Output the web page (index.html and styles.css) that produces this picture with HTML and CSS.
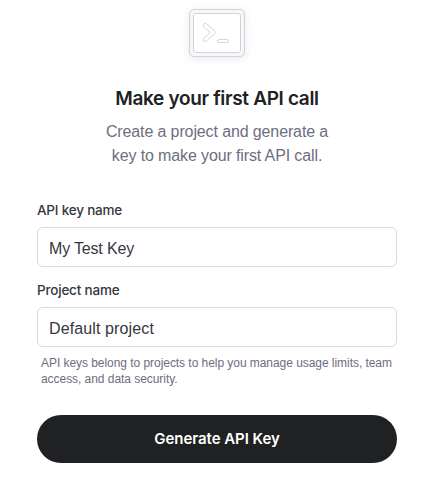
FILE: index.html
```html
<!DOCTYPE html>
<html lang="en">
<head>
<meta charset="utf-8">
<title>Make your first API call</title>
<link rel="stylesheet" href="styles.css">
</head>
<body>
<main class="dialog">
  <div class="badge">
    <svg class="terminal" width="48" height="40" viewBox="0 0 48 40" fill="none">
      <rect class="screen" x=".5" y=".5" width="47" height="39" rx="2.5"/>
      <path class="glyph" d="M10.6 13.8 Q9.8 12.5 10.6 11 Q12 10 13.2 10.8 L22 18.2 Q23 19.3 22 20.4 L13.2 28.1 Q12 29 10.7 28.1 Q9.8 27 10.6 25.4 L17.4 19.4 Z"/>
      <rect class="glyph" x="24.5" y="26.5" width="11" height="3" rx="1.5"/>
    </svg>
  </div>
  <h1 class="title">Make your first API call</h1>
  <p class="intro">Create a project and generate a<br>key to make your first API call.</p>
  <form class="form">
    <label class="label" for="key">API key name</label>
    <input class="field key" id="key" type="text" value="My Test Key">
    <label class="label project-label" for="project">Project name</label>
    <input class="field project" id="project" type="text" value="Default project">
    <p class="hint">API keys belong to projects to help you manage usage limits, team<br>access, and data security.</p>
    <button class="submit" type="button">Generate API Key</button>
  </form>
</main>
</body>
</html>
```
FILE: styles.css
```css
* { box-sizing: border-box; }
body {
  margin: 0;
  background: #fff;
  font-family: "Liberation Sans", Arial, sans-serif;
  color: #353740;
}
.dialog { padding: 9px 36px 0 37px; }
.badge {
  width: 56px;
  height: 48px;
  margin: 0 auto;
  padding: 3px;
  border: 1px solid #d3d1dd;
  border-radius: 5px;
  background: #f7f7f8;
  box-shadow: 0 2px 8px rgba(60, 50, 90, .1);
}
.terminal { display: block; }
.screen { fill: #fff; stroke: #d3d1dd; }
.glyph { stroke: #d6d5df; stroke-linejoin: round; }
.title {
  margin: 28px 0 0;
  font-family: Inter, sans-serif;
  font-size: 19px;
  line-height: 28px;
  font-weight: 600;
  letter-spacing: -.33px;
  text-align: center;
  color: #202123;
}
.intro {
  margin: 7px 0 0;
  font-size: 16px;
  line-height: 24px;
  letter-spacing: -.12px;
  text-align: center;
  color: #6e6e80;
}
.form { margin-top: 32px; }
.label {
  display: block;
  height: 20px;
  margin-bottom: 7px;
  font-family: Inter, sans-serif;
  font-size: 13.5px;
  line-height: 20px;
  font-weight: 500;
  letter-spacing: -.2px;
}
.project-label { margin-top: 13px; }
.field {
  display: block;
  width: 360px;
  height: 40px;
  padding: 3px 11px 0;
  border: 1px solid #d9d9e3;
  border-radius: 6px;
  background: #fff;
  font-family: "Liberation Sans", Arial, sans-serif;
  font-size: 16px;
  color: #353740;
}
.key { letter-spacing: -.17px; }
.project { letter-spacing: .12px; }
.hint {
  margin: 8px 0 0 4px;
  font-size: 12px;
  line-height: 16px;
  letter-spacing: -.05px;
  white-space: nowrap;
  color: #6e6e80;
}
.submit {
  display: block;
  width: 360px;
  height: 48px;
  margin-top: 28px;
  padding: 0 0 2px;
  border: 0;
  border-radius: 24px;
  background: #202123;
  font-family: Inter, sans-serif;
  font-size: 15px;
  font-weight: 600;
  letter-spacing: -.05px;
  color: #fff;
}
```
